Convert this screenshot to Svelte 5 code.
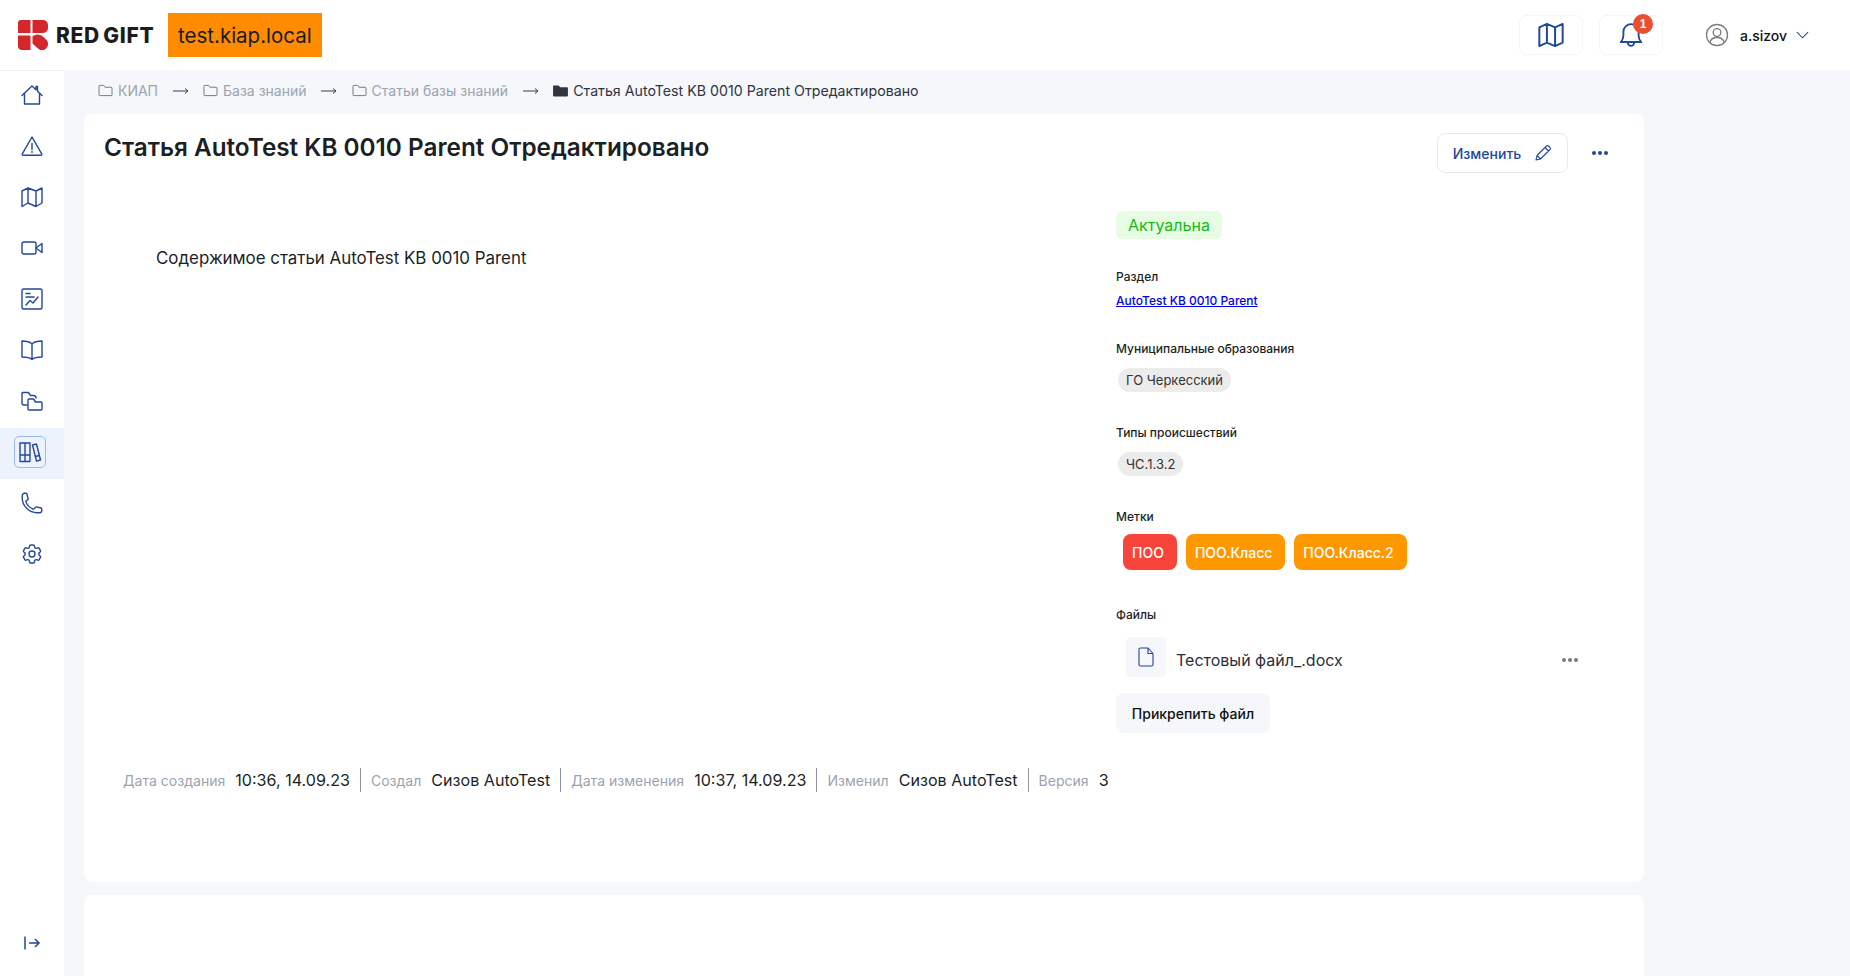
<script>
  const crumbs = ['КИАП', 'База знаний', 'Статьи базы знаний'];
  const tags = [
    { text: 'ПОО', color: '#f9443b' },
    { text: 'ПОО.Класс', color: '#ff9800' },
    { text: 'ПОО.Класс.2', color: '#ff9800' },
  ];
  const meta = [
    ['Дата создания', '10:36, 14.09.23'],
    ['Создал', 'Сизов AutoTest'],
    ['Дата изменения', '10:37, 14.09.23'],
    ['Изменил', 'Сизов AutoTest'],
    ['Версия', '3'],
  ];
  const navIcons = [
    '<path d="M2 12.500 12 3l4 3.800V3.500h1.500v4.700L22 12.500M4.500 10.500V21h15V10.500"/>',
    '<path d="M12 3 2.300 19.800A1 1 0 0 0 3.200 21.300h17.600a1 1 0 0 0 .9-1.500L12 3zM12 9.500v6M12 17.500v1"/>',
    '<path d="M2 6 8 3l8 3 6-3v15l-6 3.500L8 18l-6 3.500V6zM8 3v15M16 6v15.500"/>',
    '<rect x="2" y="6" width="14" height="12" rx="2"/><path d="m16 12 6-4.500v9l-6-4.500z"/>',
    '<rect x="2" y="2" width="20" height="20" rx="1.500"/><path d="M6 6.500h4M6 10h8M6 18l4-4.500 3 2.500 5-6"/>',
    '<path d="M12 6C10 4 6 3 2 3v16c4 0 8 .5 10 2.500C14 19.500 18 19 22 19V3c-4 0-8 1-10 3zM12 6v15.500"/>',
    '<path d="M7 16H4a2 2 0 0 1-2-2V4.500a1 1 0 0 1 1-1h5.500l2 3h3a2.500 2.500 0 0 1 2.500 2.500"/><path d="M8 11a1 1 0 0 1 1-1h4.500l2 3h5.500a1 1 0 0 1 1 1v6a1 1 0 0 1-1 1H9a1 1 0 0 1-1-1v-9z"/>',
    '<path d="M2 3h5v18.500H2zM7 3h5v18.500H7zM2 15h10M14.500 5l4-1 4 16-4 1.200zM17.300 16.500l4-1"/>',
    '<path d="M2.250 6.750c0 8.284 6.716 15 15 15h2.250a2.250 2.250 0 0 0 2.250-2.250v-1.372c0-.516-.351-.966-.852-1.091l-4.423-1.106c-.44-.11-.902.055-1.173.417l-.97 1.293c-.282.376-.769.542-1.21.38a12.035 12.035 0 0 1-7.143-7.143c-.162-.441.004-.928.38-1.210l1.293-.97c.363-.271.527-.734.417-1.173L6.963 3.102a1.125 1.125 0 0 0-1.091-.852H4.500A2.250 2.250 0 0 0 2.250 4.500v2.250Z"/>',
    '<circle cx="12" cy="12" r="3"/><path d="M9.594 3.940c.09-.542.56-.94 1.110-.94h2.593c.55 0 1.020.398 1.110.94l.213 1.281c.063.374.313.686.645.870.074.040.147.083.22.127.325.196.72.257 1.075.124l1.217-.456a1.125 1.125 0 0 1 1.370.49l1.296 2.247a1.125 1.125 0 0 1-.26 1.431l-1.003.827c-.293.241-.438.613-.43.992a7.723 7.723 0 0 1 0 .255c-.008.378.137.75.43.991l1.004.827c.424.35.534.955.26 1.430l-1.298 2.247a1.125 1.125 0 0 1-1.369.491l-1.217-.456c-.355-.133-.75-.072-1.076.124a6.470 6.470 0 0 1-.22.128c-.331.183-.581.495-.644.869l-.213 1.281c-.09.543-.56.94-1.110.94h-2.594c-.55 0-1.019-.398-1.110-.94l-.213-1.281c-.062-.374-.312-.686-.644-.87a6.520 6.520 0 0 1-.22-.127c-.325-.196-.72-.257-1.076-.124l-1.217.456a1.125 1.125 0 0 1-1.369-.49l-1.297-2.247a1.125 1.125 0 0 1 .26-1.431l1.004-.827c.292-.24.437-.613.43-.991a6.932 6.932 0 0 1 0-.255c.007-.38-.138-.751-.43-.992l-1.004-.827a1.125 1.125 0 0 1-.26-1.430l1.297-2.247a1.125 1.125 0 0 1 1.370-.491l1.216.456c.356.133.751.072 1.076-.124.072-.044.146-.086.22-.128.332-.183.582-.495.644-.869l.214-1.280Z"/>',
  ];
</script>

<div class="page">
  <header class="topbar">
    <div class="brand">
      <svg class="logo-mark" viewBox="0 0 30 30" width="30" height="30">
        <path fill="#d3272b" d="M3 0h9.500v13H0V3a3 3 0 0 1 3-3zM0 15.500h12.500V30H4a4 4 0 0 1-4-4V15.500zM14.500 0H25a5 5 0 0 1 5 5v3a5 5 0 0 1-5 5H14.500V0zM14.500 16l4.500-1.500c3 0 5 1 7 3l3 3c2 3 1 6-1 8-3 3-6 2-8 0l-5.500-5v-7.500z"/>
      </svg>
      <span class="logo-text">RED GIFT</span>
      <span class="stand">test.kiap.local</span>
    </div>
    <div class="top-actions">
      <button class="square">
        <svg viewBox="0 0 24 24" width="28" height="28" fill="none" stroke="#23479b" stroke-width="1.700" stroke-linejoin="round"><path d="M2 5.500 8.500 2.500l7 3L22 2.500v16l-6.500 3-7-3L2 21.500v-16zM8.500 2.500v16M15.500 5.500v16"/></svg>
      </button>
      <button class="square">
        <svg viewBox="0 0 24 24" width="26" height="26" fill="none" stroke="#23479b" stroke-width="1.700" stroke-linejoin="round"><path d="M2.500 18.500c1.500-1.500 2.500-3 2.500-6V9a7 7 0 0 1 14 0v3.500c0 3 1 4.500 2.500 6h-19zM9 19a3 3 0 0 0 6 0"/></svg>
        <span class="badge">1</span>
      </button>
      <div class="user">
        <svg viewBox="0 0 24 24" width="24" height="24" fill="none" stroke="#7d7d7d" stroke-width="1.300"><circle cx="12" cy="12" r="10.500"/><circle cx="12" cy="9.500" r="3.800"/><path d="M4.800 19.500c1-3.500 3.800-5 7.200-5s6.200 1.500 7.200 5"/></svg>
        <span class="user-name">a.sizov</span>
        <svg viewBox="0 0 14 8" width="13" height="8" fill="none" stroke="#23479b" stroke-width="1.100"><path d="m1 1 6 6 6-6"/></svg>
      </div>
    </div>
  </header>

  <div class="body">
    <nav class="sidebar">
      <div class="nav-list">
        {#each navIcons as icon, i}
          <div class="nav-item" class:active={i === 7}>
            <span class="nav-icon">
              <svg viewBox="0 0 24 24" width="24" height="24" fill="none" stroke="#23479b" stroke-width="1.400" stroke-linejoin="round" stroke-linecap="round">{@html icon}</svg>
            </span>
          </div>
        {/each}
      </div>
      <div class="collapse">
        <svg viewBox="0 0 18 16" width="18" height="16" fill="none" stroke="#23479b" stroke-width="1.500"><path d="M2 1.500v13M6 8h10M12 4l4 4-4 4"/></svg>
      </div>
    </nav>

    <main class="content">
      <div class="crumbs">
        {#each crumbs as c}
          <span class="crumb">
            <svg viewBox="0 0 16 14" width="15" height="13" fill="none" stroke="#6b7280" stroke-width="1"><path d="M1 2.500a1 1 0 0 1 1-1h4l1.500 2H14a1 1 0 0 1 1 1v7a1 1 0 0 1-1 1H2a1 1 0 0 1-1-1v-9z"/></svg>
            {c}
          </span>
          <svg class="arrow" viewBox="0 0 16 8" width="16" height="8" fill="none" stroke="#374151" stroke-width="1"><path d="M0 4h15M12 1.500 15 4l-3 2.500"/></svg>
        {/each}
        <span class="crumb current">
          <svg viewBox="0 0 16 14" width="15" height="13" fill="#2f3440"><path d="M0 2.500a1 1 0 0 1 1-1h5l1.500 2H15a1 1 0 0 1 1 1v8a1 1 0 0 1-1 1H1a1 1 0 0 1-1-1v-10z"/></svg>
          Статья AutoTest KB 0010 Parent Отредактировано
        </span>
      </div>

      <section class="card">
        <div class="card-head">
          <h1>Статья AutoTest KB 0010 Parent Отредактировано</h1>
          <div class="head-actions">
            <button class="edit">
              Изменить
              <svg viewBox="0 0 18 18" width="18" height="18" fill="none" stroke="#23479b" stroke-width="1.100" stroke-linejoin="round"><path d="M2 16l1-4.500L12.500 2a1.500 1.500 0 0 1 2 0l1.500 1.500a1.500 1.500 0 0 1 0 2L6.500 15 2 16zM11 3.500 14.500 7M3 11.500 6.500 15"/></svg>
            </button>
            <span class="dots blue"><i></i><i></i><i></i></span>
          </div>
        </div>

        <div class="columns">
          <div class="article">Содержимое статьи AutoTest KB 0010 Parent</div>
          <aside class="side">
            <span class="status">Актуальна</span>

            <div class="label section-label">Раздел</div>
            <a class="link" href="#top">AutoTest KB 0010 Parent</a>

            <div class="label mun-label">Муниципальные образования</div>
            <span class="chip">ГО Черкесский</span>

            <div class="label types-label">Типы происшествий</div>
            <span class="chip">ЧС.1.3.2</span>

            <div class="label marks-label">Метки</div>
            <div class="tags">
              {#each tags as t}
                <span class="tag" style="background: {t.color}">{t.text}</span>
              {/each}
            </div>

            <div class="label files-label">Файлы</div>
            <div class="file">
              <span class="file-icon">
                <svg viewBox="0 0 16 20" width="16" height="20" fill="none" stroke="#23479b" stroke-width="1.100" stroke-linejoin="round"><path d="M1 2.500A1.500 1.500 0 0 1 2.500 1H10l5 5.500V17.500a1.500 1.500 0 0 1-1.500 1.500h-11A1.500 1.500 0 0 1 1 17.500v-15zM10 1v5.500h5"/></svg>
              </span>
              <span class="file-name">Тестовый файл_.docx</span>
              <span class="dots grey"><i></i><i></i><i></i></span>
            </div>
            <button class="attach">Прикрепить файл</button>
          </aside>
        </div>

        <div class="meta">
          {#each meta as [k, v]}
            <div class="meta-item"><span class="meta-key">{k}</span><span class="meta-val">{v}</span></div>
          {/each}
        </div>
      </section>

      <section class="card second"></section>
    </main>
  </div>
</div>

<style>
  :global(body) {
    margin: 0;
    font-family: Inter, "Noto Sans", sans-serif;
    background: #f5f7fb;
    overflow: hidden;
  }

  .page {
    height: 976px;
    display: flex;
    flex-direction: column;
    overflow: hidden;
  }

  .topbar {
    height: 70px;
    flex-shrink: 0;
    background: #fff;
    display: flex;
    justify-content: space-between;
    align-items: center;
    padding: 0 27px 0 18px;
  }

  .brand {
    display: flex;
    align-items: center;
  }

  .logo-text {
    margin-left: 8px;
    width: 112px;
    font-size: 21px;
    font-weight: 800;
    color: #1c1c1c;
    letter-spacing: 0.7px;
    word-spacing: -2px;
    white-space: nowrap;
  }

  .stand {
    height: 44px;
    padding: 0 10px;
    display: flex;
    align-items: center;
    background: #ff8c00;
    color: #1a1a1a;
    font-size: 20.5px;
  }

  .top-actions {
    display: flex;
    align-items: center;
  }

  .square {
    position: relative;
    width: 64px;
    height: 40px;
    margin-right: 16px;
    display: flex;
    align-items: center;
    justify-content: center;
    background: #fff;
    border: 1px solid #f4f5f8;
    border-radius: 8px;
    padding: 0;
  }

  .badge {
    position: absolute;
    top: -2px;
    right: 9px;
    width: 20px;
    height: 20px;
    border-radius: 50%;
    background: #e8502f;
    color: #fff;
    font-size: 12px;
    font-weight: 600;
    display: flex;
    align-items: center;
    justify-content: center;
  }

  .user {
    display: flex;
    align-items: center;
    margin-left: 26px;
    width: 118px;
  }

  .user-name {
    margin: 0 9px 0 11px;
    font-size: 14px;
    font-weight: 500;
    color: #111;
  }

  .body {
    flex: 1;
    display: flex;
    min-height: 0;
  }

  .sidebar {
    width: 64px;
    flex-shrink: 0;
    background: #fff;
    display: flex;
    flex-direction: column;
    justify-content: space-between;
    border-top: 1px solid #f0f1f5;
    box-sizing: border-box;
  }

  .nav-item {
    height: 51px;
    box-sizing: border-box;
    padding-bottom: 3px;
    display: flex;
    align-items: center;
    justify-content: center;
  }

  .nav-item.active {
    background: #edf3fc;
    padding-right: 4px;
  }

  .nav-icon {
    width: 32px;
    height: 32px;
    display: flex;
    align-items: center;
    justify-content: center;
    border: 1px solid transparent;
    border-radius: 5px;
    box-sizing: border-box;
  }

  .active .nav-icon {
    border-color: #9db8f0;
  }

  .collapse {
    display: flex;
    justify-content: center;
    padding-bottom: 25px;
  }

  .content {
    flex: 1;
    min-width: 0;
    padding: 0 206px 0 20px;
  }

  .crumbs {
    height: 44px;
    box-sizing: border-box;
    padding: 0 0 3px 14px;
    display: flex;
    align-items: center;
    font-size: 14px;
    color: #9ca3af;
  }

  .crumb {
    display: inline-flex;
    align-items: center;
    gap: 5px;
    white-space: nowrap;
  }

  .crumb.current {
    color: #2f3440;
    font-size: 14.2px;
  }

  .arrow {
    margin: 0 14.500px;
  }

  .card {
    height: 768px;
    box-sizing: border-box;
    background: #fff;
    border-radius: 8px;
    padding: 19px 20px 0;
  }

  .card.second {
    height: 200px;
    margin-top: 13px;
  }

  .card-head {
    display: flex;
    justify-content: space-between;
    align-items: flex-start;
  }

  h1 {
    margin: 0;
    font-size: 24.3px;
    line-height: 28px;
    font-weight: 600;
    color: #1c1f24;
  }

  .head-actions {
    display: flex;
    align-items: center;
    margin-right: 16px;
    gap: 24px;
  }

  .edit {
    height: 40px;
    width: 131px;
    box-sizing: border-box;
    display: flex;
    align-items: center;
    justify-content: center;
    gap: 13px;
    background: #fff;
    border: 1px solid #e6e8ee;
    border-radius: 8px;
    color: #23479b;
    font: 500 14px Inter, sans-serif;
  }

  .dots {
    display: inline-flex;
    gap: 2px;
  }

  .dots i {
    width: 4px;
    height: 4px;
    border-radius: 50%;
    background: #23479b;
  }

  .dots.grey {
    margin-top: 6px;
  }

  .dots.grey i {
    background: #7a7a7a;
  }

  .columns {
    display: flex;
    height: 534px;
    margin-top: 38px;
  }

  .article {
    width: 1012px;
    flex-shrink: 0;
    padding: 35px 0 0 52px;
    box-sizing: border-box;
    font-size: 16.900px;
    line-height: 24px;
    color: #1c1f24;
  }

  .side {
    flex: 1;
    min-width: 0;
    display: flex;
    flex-direction: column;
    align-items: flex-start;
  }

  .status {
    height: 28px;
    padding: 0 12px;
    display: flex;
    align-items: center;
    background: #e6fde4;
    border-radius: 6px;
    color: #16b816;
    font-size: 16px;
  }

  .label {
    font-size: 12px;
    line-height: 16px;
    font-weight: 500;
    color: #1c1f24;
  }

  .section-label {
    margin-top: 30px;
  }

  .link {
    margin-top: 8px;
    font-size: 12px;
    line-height: 16px;
    color: #0000ee;
    font-weight: 500;
  }

  .mun-label {
    margin-top: 32px;
  }

  .types-label {
    margin-top: 33px;
  }

  .chip {
    margin: 11px 0 0 2px;
    height: 24px;
    padding: 0 8px;
    display: flex;
    align-items: center;
    background: #ececec;
    border-radius: 12px;
    font-size: 13px;
    color: #333;
  }

  .marks-label {
    margin-top: 33px;
  }

  .tags {
    display: flex;
    gap: 9px;
    margin: 9px 0 0 7px;
  }

  .tag {
    height: 36px;
    padding: 0 13px 0 9px;
    display: flex;
    align-items: center;
    border-radius: 8px;
    color: #fff;
    font-size: 14px;
    font-weight: 500;
  }

  .files-label {
    margin-top: 37px;
  }

  .file {
    width: 100%;
    display: flex;
    align-items: center;
    margin: 14px 0 0 10px;
    padding-right: 56px;
    box-sizing: border-box;
  }

  .file-icon {
    width: 40px;
    height: 40px;
    background: #f5f7fb;
    border-radius: 5px;
    display: flex;
    align-items: center;
    justify-content: center;
  }

  .file-name {
    flex: 1;
    margin: 6px 0 0 10px;
    font-size: 16px;
    color: #2b2f36;
  }

  .attach {
    margin-top: 16px;
    height: 40px;
    width: 154px;
    border: none;
    background: #f5f7fb;
    border-radius: 8px;
    font: 500 14px Inter, sans-serif;
    color: #111;
  }

  .meta {
    display: flex;
    padding-left: 19px;
    margin-top: 23px;
  }

  .meta-item {
    display: flex;
    align-items: center;
    gap: 10px;
    height: 24px;
    padding: 0 10px;
    border-left: 1px solid #8d93a3;
    font-size: 16.1px;
    white-space: nowrap;
  }

  .meta-item:first-child {
    border-left: none;
    padding-left: 0;
  }

  .meta-key {
    font-size: 14.05px;
    color: #9ca3af;
  }

  .meta-val {
    color: #1c1f24;
  }
</style>
